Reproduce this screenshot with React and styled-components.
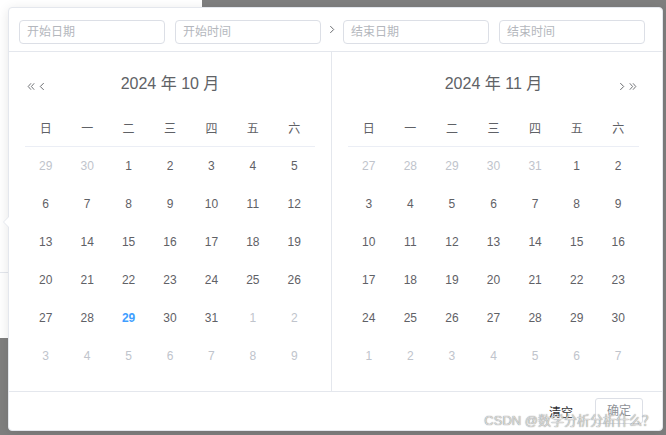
import React from 'react';
import styled, { createGlobalStyle } from 'styled-components';

const GlobalStyle = createGlobalStyle`
  html, body {
    margin: 0;
    padding: 0;
    background: #7f7f7f;
    font-family: "Liberation Sans", Arial, "Noto Sans CJK SC", sans-serif;
  }
  * { box-sizing: border-box; }
`;

const Stage = styled.div`
  position: relative;
  width: 666px;
  height: 435px;
  overflow: hidden;
  background: #7f7f7f;
`;

const Dialog = styled.div`
  width: 202px;
  height: 338px;
  background: #fff;
`;

const DialogBody = styled.div`
  height: 273px;
  border-bottom: 1px solid #e4e7ed;
`;

const Picker = styled.div`
  position: absolute;
  left: 8px;
  top: 7px;
  width: 655px;
  height: 424px;
  background: #fff;
  border: 1px solid #e4e7ed;
  border-radius: 4px;
  box-shadow: 0 2px 12px rgba(0, 0, 0, 0.1);
  display: flex;
  flex-direction: column;
  color: #606266;
`;

const PopArrow = styled.div`
  position: absolute;
  left: -6px;
  top: 208px;
  width: 0;
  height: 0;
  border-top: 6px solid transparent;
  border-bottom: 6px solid transparent;
  border-right: 6px solid #e4e7ed;

  &::after {
    content: '';
    position: absolute;
    left: 1px;
    top: -6px;
    border-top: 6px solid transparent;
    border-bottom: 6px solid transparent;
    border-right: 6px solid #fff;
  }
`;

const TimeHeader = styled.div`
  height: 44px;
  flex-shrink: 0;
  display: flex;
  align-items: flex-start;
  padding: 12px 0 0 10px;
  border-bottom: 1px solid #e4e7ed;
`;

const EditorGroup = styled.div`
  display: flex;
  gap: 10px;
`;

const Input = styled.div`
  width: 146px;
  height: 24px;
  border: 1px solid #dcdfe6;
  border-radius: 4px;
  padding-left: 7px;
  font-size: 12px;
  line-height: 22px;
  color: #b4b7bd;
`;

const Separator = styled.div`
  width: 22px;
  height: 24px;
  display: flex;
  justify-content: center;
  padding-top: 5px;
  padding-right: 1px;
`;

const Body = styled.div`
  display: flex;
  height: 340px;
  flex-shrink: 0;
  border-bottom: 1px solid #e4e7ed;
`;

const Pane = styled.div`
  width: ${p => (p.$right ? 'auto' : '323px')};
  flex: ${p => (p.$right ? '1' : 'none')};
  padding: ${p => (p.$right ? '16px 23px 16px 16px' : '16px')};
  border-right: ${p => (p.$right ? 'none' : '1px solid #e4e7ed')};
`;

const PaneHeader = styled.div`
  height: 28px;
  display: flex;
  align-items: center;
`;

const NavGroup = styled.div`
  width: 24px;
  height: 28px;
  display: flex;
  align-items: center;
  justify-content: ${p => (p.$end ? 'flex-end' : 'flex-start')};
  gap: 4px;
  padding: 8px 2px 0;
`;

const Title = styled.div`
  flex: 1;
  text-align: center;
  font-size: 16px;
  color: #606266;
  white-space: nowrap;
`;

const Table = styled.div`
  margin-top: 12px;
`;

const Row = styled.div`
  display: grid;
  grid-template-columns: repeat(7, 1fr);
  height: ${p => (p.$head ? '39px' : '38px')};
  border-bottom: ${p => (p.$head ? '1px solid #ebeef5' : 'none')};
  align-items: center;
`;

const Cell = styled.div`
  text-align: center;
  font-size: 12px;
  font-weight: ${p => (p.$today ? 700 : 400)};
  color: ${p => (p.$today ? '#409eff' : p.$muted ? '#c0c4cc' : '#5f6166')};
`;

const Footer = styled.div`
  flex: 1;
  display: flex;
  align-items: center;
  justify-content: flex-end;
  gap: 22px;
  padding-right: 19px;
`;

const TextButton = styled.span`
  font-size: 12px;
  color: #303133;
`;

const PlainButton = styled.div`
  width: 48px;
  height: 26px;
  border: 1px solid #dcdfe6;
  border-radius: 3px;
  font-size: 12px;
  line-height: 24px;
  text-align: center;
  color: #8e9197;
`;

const Watermark = styled.div`
  position: absolute;
  right: 11px;
  bottom: 6px;
  font-size: 13px;
  color: rgba(235, 235, 235, 0.85);
  text-shadow: 0 0 1px rgba(70, 70, 70, 0.9);
  white-space: nowrap;
`;

const Chevron = ({ dir = 'left', double }) => {
  const flip = dir === 'right' ? 'scale(-1,1) translate(-10,0)' : undefined;
  return (
    <svg width={double ? 8 : 6} height="9" viewBox={double ? '0 0 10 10' : '0 0 7 10'} fill="none" stroke="#606266" strokeWidth="1.1">
      {double ? (
        <g transform={flip}>
          <path d="M5 1 L1.5 5 L5 9" />
          <path d="M9 1 L5.5 5 L9 9" />
        </g>
      ) : (
        <path d={dir === 'right' ? 'M1.5 1 L5.5 5 L1.5 9' : 'M5.5 1 L1.5 5 L5.5 9'} />
      )}
    </svg>
  );
};

const WEEK = ['日', '一', '二', '三', '四', '五', '六'];

const buildDays = (year, month) => {
  const first = new Date(year, month, 1).getDay();
  const start = new Date(year, month, 1 - first);
  return Array.from({ length: 42 }, (_, i) => {
    const d = new Date(start.getFullYear(), start.getMonth(), start.getDate() + i);
    return {
      day: d.getDate(),
      muted: d.getMonth() !== month,
      today: d.getFullYear() === 2024 && d.getMonth() === 9 && d.getDate() === 29,
    };
  });
};

const Month = ({ year, month, right }) => {
  const days = buildDays(year, month);
  const rows = [0, 1, 2, 3, 4, 5].map(r => days.slice(r * 7, r * 7 + 7));
  return (
    <Pane $right={right}>
      <PaneHeader>
        <NavGroup>
          {!right && (
            <>
              <Chevron double />
              <Chevron />
            </>
          )}
        </NavGroup>
        <Title>{year} 年 {month + 1} 月</Title>
        <NavGroup $end>
          {right && (
            <>
              <Chevron dir="right" />
              <Chevron dir="right" double />
            </>
          )}
        </NavGroup>
      </PaneHeader>
      <Table>
        <Row $head>
          {WEEK.map(w => (
            <Cell key={w}>{w}</Cell>
          ))}
        </Row>
        {rows.map((row, i) => (
          <Row key={i}>
            {row.map((d, j) => (
              <Cell key={j} $muted={d.muted} $today={d.today && !d.muted}>
                {d.day}
              </Cell>
            ))}
          </Row>
        ))}
      </Table>
    </Pane>
  );
};

const App = () => (
  <Stage>
    <GlobalStyle />
    <Dialog>
      <DialogBody />
    </Dialog>
    <Picker>
      <PopArrow />
      <TimeHeader>
        <EditorGroup>
          <Input>开始日期</Input>
          <Input>开始时间</Input>
        </EditorGroup>
        <Separator>
          <Chevron dir="right" />
        </Separator>
        <EditorGroup>
          <Input>结束日期</Input>
          <Input>结束时间</Input>
        </EditorGroup>
      </TimeHeader>
      <Body>
        <Month year={2024} month={9} />
        <Month year={2024} month={10} right />
      </Body>
      <Footer>
        <TextButton>清空</TextButton>
        <PlainButton>确定</PlainButton>
      </Footer>
    </Picker>
    <Watermark>CSDN @数学分析分析什么？</Watermark>
  </Stage>
);

export default App;
